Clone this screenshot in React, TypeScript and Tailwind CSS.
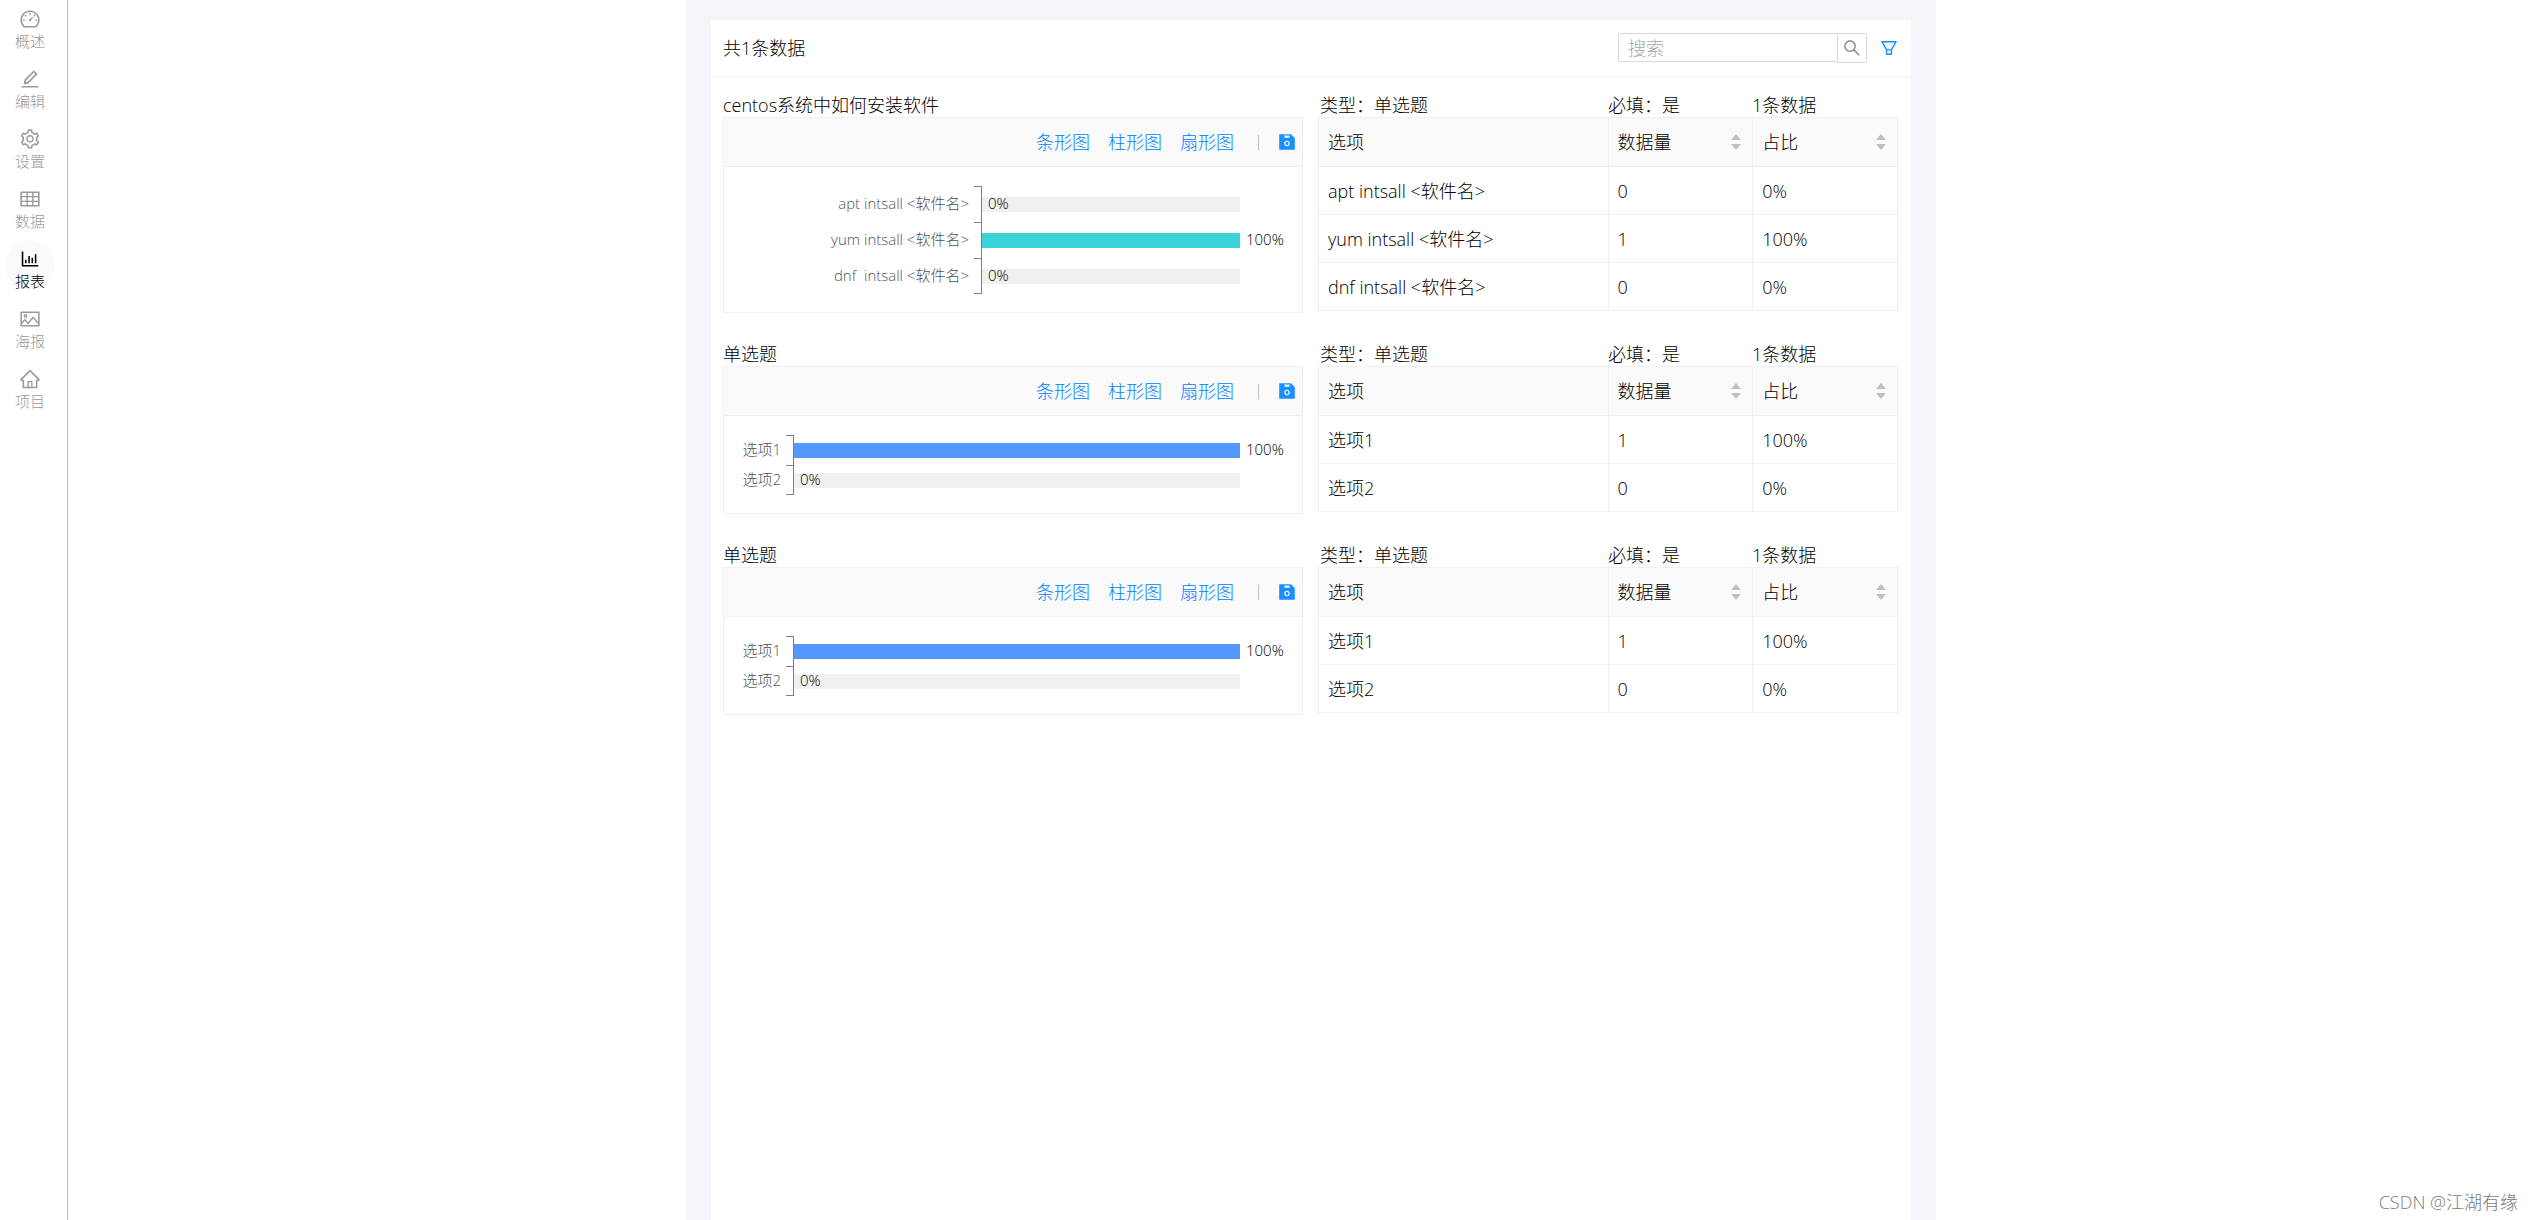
import React from "react";
import {
  AiFillSave,
  AiOutlineBarChart,
  AiOutlineDashboard,
  AiOutlineEdit,
  AiOutlineHome,
  AiOutlinePicture,
  AiOutlineSearch,
  AiOutlineSetting,
  AiOutlineTable,
} from "react-icons/ai";

type Option = { name: string; axisName?: string; count: number; percent: number };
type Question = {
  title: string;
  options: Option[];
  labelWidth: string;
  rowHeight: string;
  barColor: string;
};

const navItems = [
  { label: "概述", Icon: AiOutlineDashboard },
  { label: "编辑", Icon: AiOutlineEdit },
  { label: "设置", Icon: AiOutlineSetting },
  { label: "数据", Icon: AiOutlineTable },
  { label: "报表", Icon: AiOutlineBarChart, active: true },
  { label: "海报", Icon: AiOutlinePicture },
  { label: "项目", Icon: AiOutlineHome },
];

const choice: Question = {
  title: "单选题",
  options: [
    { name: "选项1", count: 1, percent: 100 },
    { name: "选项2", count: 0, percent: 0 },
  ],
  labelWidth: "w-[62px]",
  rowHeight: "h-[30px]",
  barColor: "bg-[#5498ff]",
};

const questions: Question[] = [
  {
    title: "centos系统中如何安装软件",
    options: [
      { name: "apt intsall <软件名>", count: 0, percent: 0 },
      { name: "yum intsall <软件名>", count: 1, percent: 100 },
      { name: "dnf intsall <软件名>", axisName: "dnf  intsall <软件名>", count: 0, percent: 0 },
    ],
    labelWidth: "w-[250px]",
    rowHeight: "h-[36px]",
    barColor: "bg-[#3ad2d9]",
  },
  choice,
  choice,
];

function Sidebar() {
  return (
    <nav className="flex w-[68px] shrink-0 flex-col gap-[10px] border-r border-[#bfbfbf] pl-[5px]">
      {navItems.map(({ label, Icon, active }) => (
        <a
          key={label}
          href="#"
          className={
            active
              ? "flex size-[50px] flex-col items-center rounded-full bg-[#fafafa] pt-2 text-black"
              : "flex size-[50px] flex-col items-center rounded-full pt-2 text-[#999999]"
          }
        >
          <Icon size={22} className="shrink-0" />
          <span className="text-[15px] leading-[22px]">{label}</span>
        </a>
      ))}
    </nav>
  );
}

function FilterIcon() {
  return (
    <svg viewBox="0 0 1024 1024" className="size-5">
      <path
        fill="#e6f7ff"
        d="M420.6 798h182.9V642H420.6zM411 561.4l9.5 16.6h183l9.5-16.6L811.3 226H212.7z"
      />
      <path
        fill="#1890ff"
        d="M880.1 154H143.9c-24.5 0-39.8 26.7-27.5 48L349 597.4V838c0 17.7 14.2 32 31.8 32h262.4c17.6 0 31.8-14.3 31.8-32V597.4L907.7 202c12.2-21.3-3.1-48-27.6-48zM603.4 798H420.6V642h182.9v156zm9.6-236.6l-9.5 16.6h-183l-9.5-16.6L212.7 226h598.6L613 561.4z"
      />
    </svg>
  );
}

function SortIcon() {
  return (
    <svg viewBox="0 0 10 16" className="h-4 w-[10px]" fill="#bfbfbf">
      <path d="M5 0l5 6H0zM5 16l5-6H0z" />
    </svg>
  );
}

function TopBar() {
  return (
    <header className="flex h-[57px] items-center justify-between border-b border-[#f0f0f0] px-3">
      <h1>共1条数据</h1>
      <div className="flex items-center">
        <input
          type="text"
          aria-label="搜索"
          placeholder="搜索"
          className="h-[29px] w-[219px] self-start rounded-l-xs border border-r-0 border-[#d9d9d9] px-[9px] outline-none placeholder:text-[#a6a6a6]"
        />
        <button
          type="button"
          aria-label="执行搜索"
          className="flex size-[30px] items-center justify-center rounded-r-xs border border-[#d9d9d9] text-[#8c8c8c]"
        >
          <AiOutlineSearch size={20} />
        </button>
        <button type="button" aria-label="筛选" className="ml-3">
          <FilterIcon />
        </button>
      </div>
    </header>
  );
}

function BarRow({ option, question, last }: { option: Option; question: Question; last: boolean }) {
  const full = option.percent > 0;
  return (
    <div className={`flex items-stretch ${question.rowHeight}`}>
      <span
        className={`flex shrink-0 items-center justify-end pr-[5px] pb-[2px] whitespace-pre text-[#4f515a] ${question.labelWidth}`}
      >
        {option.axisName ?? option.name}
      </span>
      <span
        className={
          last
            ? "w-2 shrink-0 border-y border-r border-[#7c7e87]"
            : "w-2 shrink-0 border-t border-r border-[#7c7e87]"
        }
      />
      <div className="relative flex flex-1 items-center">
        <div className="h-[15px] w-full bg-[#f0f0f0]">
          <div className={`h-full ${question.barColor}`} style={{ width: `${option.percent}%` }} />
        </div>
        <span
          className={
            full
              ? "absolute left-full pb-[2px] pl-[6px] text-black"
              : "absolute left-0 pb-[2px] pl-[6px] text-black"
          }
        >
          {option.percent}%
        </span>
      </div>
    </div>
  );
}

function ChartCard({ question }: { question: Question }) {
  return (
    <section className="border border-[#f0f0f0]">
      <div className="flex h-[49px] items-center justify-end gap-[18px] border-b border-[#f0f0f0] bg-[#fafafa] pr-[5px] text-[#0080ff]">
        <button type="button">条形图</button>
        <button type="button">柱形图</button>
        <button type="button">扇形图</button>
        <span className="ml-[6px] h-[15px] w-px bg-[#bfbfbf]" />
        <button type="button" aria-label="保存" className="text-[#1890ff]">
          <AiFillSave size={20} />
        </button>
      </div>
      <div className="pt-[19px] pr-[62px] pb-[18px] text-[15px] leading-5">
        {question.options.map((option, i) => (
          <BarRow
            key={option.name}
            option={option}
            question={question}
            last={i === question.options.length - 1}
          />
        ))}
      </div>
    </section>
  );
}

function DataTable({ question }: { question: Question }) {
  const cell = "border border-[#f0f0f0] px-[9px]";
  return (
    <table className="w-full table-fixed border-collapse self-start text-left">
      <thead>
        <tr className="h-[49px] bg-[#fafafa]">
          <th className={`${cell} w-1/2 font-light`}>选项</th>
          {["数据量", "占比"].map((name) => (
            <th key={name} className={`${cell} w-1/4 font-light`}>
              <button type="button" className="flex w-full items-center justify-between pr-[2px]">
                {name}
                <SortIcon />
              </button>
            </th>
          ))}
        </tr>
      </thead>
      <tbody>
        {question.options.map((option) => (
          <tr key={option.name} className="h-12">
            <td className={cell}>{option.name}</td>
            <td className={cell}>{option.count}</td>
            <td className={cell}>{option.percent}%</td>
          </tr>
        ))}
      </tbody>
    </table>
  );
}

function QuestionBlock({ question }: { question: Question }) {
  return (
    <article className="grid grid-cols-2 gap-x-[15px]">
      <h2 className="leading-6">{question.title}</h2>
      <div className="grid grid-cols-[2fr_1fr_1fr] px-[2px] leading-6">
        <span>类型：单选题</span>
        <span>必填：是</span>
        <span>1条数据</span>
      </div>
      <ChartCard question={question} />
      <DataTable question={question} />
    </article>
  );
}

export default function App() {
  return (
    <div className="relative flex min-h-screen bg-white font-['Open_Sans','Noto_Sans_CJK_SC',sans-serif] text-lg leading-7 font-light text-black">
      <Sidebar />
      <div className="flex flex-1 justify-center pl-5">
        <main className="flex w-full max-w-[1250px] flex-col bg-[#f4f4f9] px-[25px] pt-5">
          <div className="flex-1 bg-white">
            <TopBar />
            <div className="flex flex-col gap-[29px] pt-4 pr-[13px] pl-3">
              {questions.map((question, i) => (
                <QuestionBlock key={i} question={question} />
              ))}
            </div>
          </div>
        </main>
      </div>
      <span className="absolute right-4 bottom-1 text-[#7a7a7a]">CSDN @江湖有缘</span>
    </div>
  );
}
